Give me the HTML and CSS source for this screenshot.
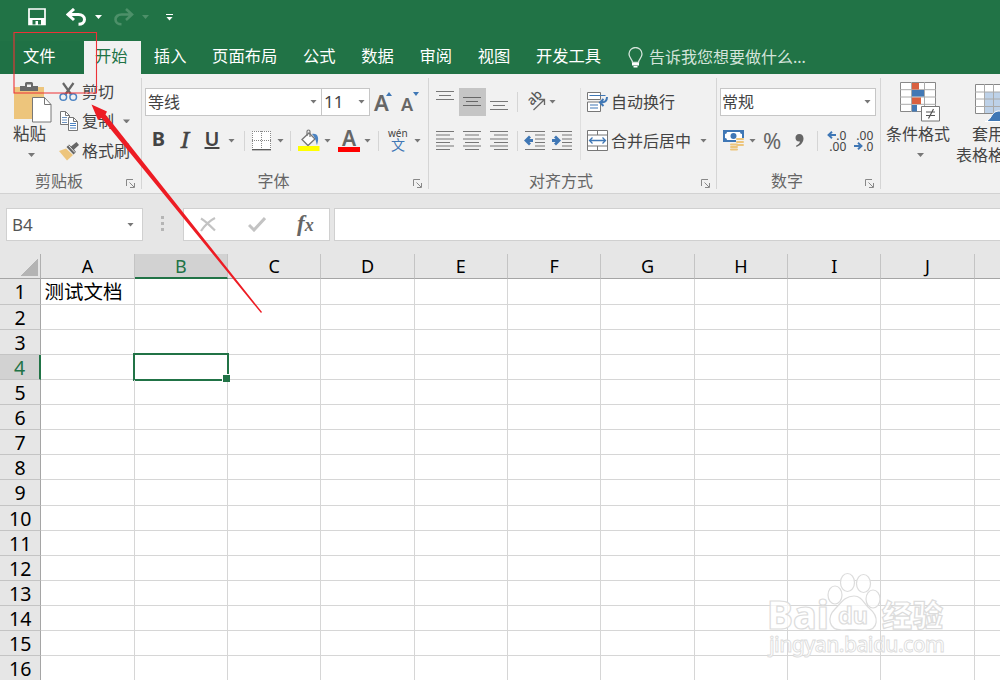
FILE: index.html
```
<!DOCTYPE html>
<html lang="zh-CN">
<head>
    <meta charset="utf-8">
    <title>Excel</title>
    <link rel="stylesheet" href="styles.css">
</head>
<body>
    <div class="title-bar">
        <svg class="qa-save" width="18" height="18" viewBox="0 0 18 18"><path d="M1 1h16v15.500H1z" fill="none" stroke="#fff" stroke-width="1.700"/><path d="M1 10h16v7H1z" fill="#fff"/><path d="M4.500 12H13v4.500H4.500z" fill="#217346"/><path d="M7.500 13h2.500v4H7.500z" fill="#fff"/></svg>
        <svg class="qa-undo" width="21" height="18" viewBox="0 0 21 18"><path d="M8 1L2 6.500l6 5.500M2.500 6.500h10c3.500 0 6 2 6 5s-2.500 4.800-6 4.800" fill="none" stroke="#fff" stroke-width="3"/></svg>
        <i class="caret white"></i>
        <svg class="qa-redo" width="21" height="18" viewBox="0 0 21 18"><path d="M13 1l6 5.500-6 5.500M18.500 6.500h-10c-3.500 0-6 2-6 5s2.500 4.800 6 4.800" fill="none" stroke="#4d9069" stroke-width="2.600"/></svg>
        <i class="caret dim"></i>
        <div class="qa-more"><i class="caret white"></i></div>
    </div>

    <div class="tabs">
        <div class="tab file">文件</div>
        <div class="tab active">开始</div>
        <div class="tab">插入</div>
        <div class="tab">页面布局</div>
        <div class="tab">公式</div>
        <div class="tab">数据</div>
        <div class="tab">审阅</div>
        <div class="tab">视图</div>
        <div class="tab">开发工具</div>
        <div class="tell-me">
            <svg width="15" height="21" viewBox="0 0 15 21"><path d="M4.500 15.500c0-3-3.500-4.500-3.500-8.500a6.300 6.300 0 0 1 13 0c0 4-3.500 5.500-3.500 8.500z" fill="none" stroke="#d3e3da" stroke-width="1.300"/><path d="M4 16h7v2.500H4zM5.500 19h4v1.500h-4z" fill="#fff"/></svg>
            <span>告诉我您想要做什么...</span>
        </div>
    </div>

    <div class="ribbon">
        <div class="group clipboard">
            <div class="group-body">
                <div class="paste">
                    <svg width="38" height="41" viewBox="0 0 38 41"><path d="M0 5h30v32H0z" fill="#edc57c"/><path d="M6 4h5V1.500Q11 0 12.500 0h5Q19 0 19 1.500V4h5v5H6z" fill="#6a6a6a"/><path d="M13 2.500h4V5h-4z" fill="#f1f1f1"/><path d="M18.500 15.500h12l6.500 7V40H18.500z" fill="#fff" stroke="#777"/><path d="M30.500 15.500v7H37" fill="none" stroke="#777"/></svg>
                    <span>粘贴</span>
                    <i class="caret"></i>
                </div>
                <div class="clip-list">
                    <div class="clip-item">
                        <svg width="20" height="20" viewBox="0 0 20 20"><path d="M4 1l8.500 12M14.500 1L6 13" stroke="#666" stroke-width="2.200" fill="none"/><circle cx="4.300" cy="15" r="3.300" fill="none" stroke="#4b83c3" stroke-width="1.500"/><circle cx="14.200" cy="15" r="3.300" fill="none" stroke="#4b83c3" stroke-width="1.500"/></svg>
                        <span>剪切</span>
                    </div>
                    <div class="clip-item">
                        <svg width="20" height="20" viewBox="0 0 20 20"><path d="M1.500.500h5l4 4v9h-9z" fill="#fff" stroke="#777"/><path d="M6.500.500v4h4" fill="none" stroke="#777"/><path d="M3 6.500h5M3 9h5M3 11.500h5" stroke="#6d93c0"/><path d="M9.500 6.500h5l4 4v9h-9z" fill="#fff" stroke="#777"/><path d="M14.500 6.500v4h4" fill="none" stroke="#777"/><path d="M11 12.500h6M11 14.500h6M11 17h6" stroke="#4b83c3"/></svg>
                        <span>复制</span>
                        <i class="caret"></i>
                    </div>
                    <div class="clip-item">
                        <svg width="20" height="20" viewBox="0 0 20 20"><path d="M0 10l7-2.500 7 6.500-6 5.500z" fill="#edc57c"/><path d="M7.500 6l7 7.500 2.500-2.500-2-2.500L20 4l-2.500-3-5.500 4.500-2-2z" fill="#666"/><path d="M9.500 4.500l6.500 7" stroke="#f1f1f1"/></svg>
                        <span>格式刷</span>
                    </div>
                </div>
            </div>
            <div class="group-name">剪贴板</div>
            <svg class="launcher" width="9" height="9" viewBox="0 0 9 9"><path d="M.500 7V.500H7M3.500 3.500L8 8M8.500 4v4.500H4" fill="none" stroke="#888"/></svg>
        </div>

        <div class="group font">
            <div class="row">
                <div class="box font-name"><span>等线</span><i class="caret"></i></div>
                <div class="box font-size"><span>11</span><i class="caret"></i></div>
                <div class="grow-font">A<i class="tri-up"></i></div>
                <div class="shrink-font">A<i class="tri-down"></i></div>
            </div>
            <div class="row second">
                <div class="letter bold">B</div>
                <div class="letter italic">I</div>
                <div class="letter underline"><u>U</u></div>
                <i class="caret"></i>
                <div class="sep"></div>
                <svg class="border-icon" width="19" height="20" viewBox="0 0 19 20"><path d="M0 0h19v19H0z" fill="#fff"/><path d="M.500 0v19M18.500 0v19M9.500 0v19M0 .500h19M0 9.500h19" stroke="#888" stroke-dasharray="1 1" fill="none"/><path d="M0 18.700h19" stroke="#555" stroke-width="1.300"/></svg>
                <i class="caret"></i>
                <div class="sep"></div>
                <svg class="fill-icon" width="22" height="23" viewBox="0 0 22 23"><path d="M4 10.500l7-6.500 6 6-7 6.500z" fill="#fff" stroke="#777" stroke-width="1.300"/><path d="M9 7V2.500Q9 1 10.500 1T12 2.500V8" fill="none" stroke="#777" stroke-width="1.200"/><path d="M14 5c6-1 7.500 4 5 11-1-2-.500-6-5-11z" fill="#4b83c3"/><path d="M0 17h21.500v5H0z" fill="#ffff00"/></svg>
                <i class="caret"></i>
                <div class="font-color">A</div>
                <i class="caret"></i>
                <div class="sep"></div>
                <div class="phonetic"><span>wén</span><b>文</b></div>
                <i class="caret"></i>
            </div>
            <div class="group-name">字体</div>
            <svg class="launcher" width="9" height="9" viewBox="0 0 9 9"><path d="M.500 7V.500H7M3.500 3.500L8 8M8.500 4v4.500H4" fill="none" stroke="#888"/></svg>
        </div>

        <div class="group align">
            <div class="align-left">
                <div class="row">
                    <svg class="al" width="27" height="27" viewBox="0 0 27 27"><path d="M4 3.500h18M7 7.500h12M4 11.500h18" stroke="#777" stroke-width="1.200"/></svg>
                    <svg class="al on" width="27" height="28" viewBox="0 0 27 28"><path d="M4 9.500h18M7 13.500h12M4 17.500h18" stroke="#666" stroke-width="1.200"/></svg>
                    <svg class="al" width="27" height="27" viewBox="0 0 27 27"><path d="M4 13.500h18M7 17.500h12M4 21.500h18" stroke="#777" stroke-width="1.200"/></svg>
                    <div class="sep"></div>
                    <svg class="orient" width="19" height="20" viewBox="0 0 19 20"><text class="ab" x="0" y="0" transform="translate(5 14) rotate(-45)">ab</text><path d="M6.500 18L17 8M12 7.500h5.500V13" fill="none" stroke="#666" stroke-width="1.300"/></svg>
                    <i class="caret"></i>
                </div>
                <div class="row second">
                    <svg class="al" width="27" height="27" viewBox="0 0 27 27"><path d="M4 4.500h18M4 8h14M4 12h18M4 15.500h14M4 19h18M4 22.500h14" stroke="#777" stroke-width="1.200"/></svg>
                    <svg class="al" width="27" height="27" viewBox="0 0 27 27"><path d="M4 4.500h18M6 8h14M4 12h18M6 15.500h14M4 19h18M6 22.500h14" stroke="#777" stroke-width="1.200"/></svg>
                    <svg class="al" width="27" height="27" viewBox="0 0 27 27"><path d="M4 4.500h18M8 8h14M4 12h18M8 15.500h14M4 19h18M8 22.500h14" stroke="#777" stroke-width="1.200"/></svg>
                    <div class="sep"></div>
                    <svg class="indent" width="27" height="27" viewBox="0 0 27 27"><path d="M4 4.500h20M14 8h10M14 12h10M14 15.500h10M14 19h10M4 22.500h20" stroke="#777" stroke-width="1.200"/><path d="M12 13.500H5M9 9.500l-4 4 4 4" fill="none" stroke="#3f77b5" stroke-width="2.800"/></svg>
                    <svg class="indent" width="27" height="27" viewBox="0 0 27 27"><path d="M4 4.500h20M14 8h10M14 12h10M14 15.500h10M14 19h10M4 22.500h20" stroke="#777" stroke-width="1.200"/><path d="M4 13.500h7M7 9.500l4 4-4 4" fill="none" stroke="#3f77b5" stroke-width="2.800"/></svg>
                </div>
            </div>
            <div class="align-right">
                <div class="row">
                    <svg width="21" height="20" viewBox="0 0 21 20"><path d="M.500.500h13v7H.500zM.500 10h13v9.500H.500z" fill="#fff" stroke="#777"/><path d="M2.500 3.500h16M3 13h8M3 16h8" stroke="#3f77b5" stroke-width="1.200"/><path d="M20 5c0 4-2 5.500-6 5.500M16.500 7l-3.500 3.500 3.500 3.500" fill="none" stroke="#3f77b5" stroke-width="2"/></svg>
                    <span>自动换行</span>
                </div>
                <div class="row second">
                    <svg width="21" height="21" viewBox="0 0 21 21"><path d="M.500.500h20v20H.500zM.500 5h20M.500 16h20M10.500 0v5M10.500 16v5" fill="#fff" stroke="#777"/><path d="M2.500 10.500h16M5.500 7.500l-3 3 3 3M15.500 7.500l3 3-3 3" fill="none" stroke="#3f77b5" stroke-width="1.300"/></svg>
                    <span>合并后居中</span>
                    <i class="caret"></i>
                </div>
            </div>
            <div class="group-name">对齐方式</div>
            <svg class="launcher" width="9" height="9" viewBox="0 0 9 9"><path d="M.500 7V.500H7M3.500 3.500L8 8M8.500 4v4.500H4" fill="none" stroke="#888"/></svg>
        </div>

        <div class="group number">
            <div class="row">
                <div class="box number-format"><span>常规</span><i class="caret"></i></div>
            </div>
            <div class="row second">
                <svg class="money" width="22" height="21" viewBox="0 0 22 21"><path d="M0 0h21v12H0z" fill="#3f77b5"/><path d="M4 2h13q0 2 2 2v4q-2 0-2 2H4q0-2-2-2V4q2 0 2-2z" fill="#fff"/><circle cx="10.500" cy="6" r="3" fill="#3f77b5"/><path d="M13 8h8v10h-8zM7 13h8v8H7z" fill="#f1f1f1"/><path d="M14 9h6M14 12h6M14 15h6M8 14.500h6M8 17h6M8 19.500h6" stroke="#edc57c" stroke-width="2" stroke-linecap="round"/></svg>
                <i class="caret"></i>
                <div class="percent">%</div>
                <svg class="comma" width="9" height="13" viewBox="0 0 9 13"><path d="M4.200 0C7 0 8.500 2 8.500 4.500c0 4-3 7-7 8.500l-.500-1.300C3.500 10.500 5 9 5 7.500 2 8 .500 6 .500 4A4 4 0 0 1 4.200 0z" fill="#666"/></svg>
                <div class="sep"></div>
                <div class="decimal"><span><svg width="9" height="8" viewBox="0 0 9 8"><path d="M9 4H2M5 .700L1.500 4 5 7.300" fill="none" stroke="#3f77b5" stroke-width="1.900"/></svg>.0</span><span>.00</span></div>
                <div class="decimal"><span>.00</span><span><svg width="9" height="8" viewBox="0 0 9 8"><path d="M0 4h7M4 .700L7.500 4 4 7.300" fill="none" stroke="#3f77b5" stroke-width="1.900"/></svg>.0</span></div>
            </div>
            <div class="group-name">数字</div>
            <svg class="launcher" width="9" height="9" viewBox="0 0 9 9"><path d="M.500 7V.500H7M3.500 3.500L8 8M8.500 4v4.500H4" fill="none" stroke="#888"/></svg>
        </div>

        <div class="group styles">
            <div class="big-button">
                <svg width="40" height="40" viewBox="0 0 40 40"><path d="M.500.500h35v29H.500z" fill="#fff" stroke="#888"/><path d="M11.500 0v30M24.500 0v30M0 7.700h36M0 15h36M0 22.300h36" stroke="#aaa"/><path d="M12 1h7v6.500h-7zM12 15.500h9V22h-9z" fill="#d9603f"/><path d="M12 8h12v6.500H12zM12 23h5v6.500h-5z" fill="#4378b4"/><path d="M21.500 24.500h18v14.500h-18z" fill="#fff" stroke="#777"/><path d="M26 30h9M26 33.500h9M33.500 27l-5 9.500" stroke="#555" stroke-width="1.200"/></svg>
                <span>条件格式</span>
                <i class="caret"></i>
            </div>
            <div class="big-button">
                <svg width="40" height="40" viewBox="0 0 40 40"><path d="M.500 2.500h38v29H.500z" fill="#fff" stroke="#888"/><path d="M10 10h29v21H10z" fill="#bdd1e8"/><path d="M9.500 2v29M18.500 2v29M28 2v29M0 10h38M0 17h38M0 24.500h38" stroke="#aaa"/><path d="M10 39.500c6-1 6-8 11-10 6-2 9 2 9 10z" fill="#3f77b5" stroke="#fff"/></svg>
                <span>套用<br>表格格式</span>
            </div>
        </div>
    </div>

    <div class="formula-bar">
        <div class="name-box"><span>B4</span><i class="caret"></i></div>
        <div class="dots"><i></i><i></i><i></i></div>
        <div class="fx-box">
            <svg width="16" height="15" viewBox="0 0 16 15"><path d="M1 1.500c5 3 9 7 14 12M15 1C9 4 5 8 1 14" fill="none" stroke="#c3c3c3" stroke-width="2.200"/></svg>
            <svg width="18" height="15" viewBox="0 0 18 15"><path d="M1 8l5 5L17 1" fill="none" stroke="#c3c3c3" stroke-width="3"/></svg>
            <div class="fx"><span>f</span>x</div>
        </div>
        <div class="formula-input"></div>
    </div>

    <div class="sheet" id="sheet"></div>

    <svg class="watermark" width="190" height="95" viewBox="0 0 190 95">
        <g class="wm">
            <text class="wm-bai" x="4" y="64" textLength="62" lengthAdjust="spacingAndGlyphs">Bai</text>
            <ellipse cx="72" cy="30" rx="7" ry="9"/>
            <ellipse cx="84.500" cy="17.500" rx="7" ry="9"/>
            <ellipse cx="100.500" cy="18.500" rx="7" ry="9"/>
            <ellipse cx="110" cy="34" rx="7" ry="9"/>
            <path d="M91 31c8 0 10 8 15 12 11 9 9 22-3 22-8 0-16-1-24 0-14 0-15-13-7-21 6-6 10-13 19-13z"/>
            <text class="wm-du" x="75" y="59" textLength="30" lengthAdjust="spacingAndGlyphs">du</text>
            <text class="wm-cn" x="119" y="61" textLength="61">经验</text>
            <text class="wm-url" x="6" y="87" textLength="176">jingyan.baidu.com</text>
        </g>
    </svg>

    <svg class="marks" width="1000" height="680" viewBox="0 0 1000 680">
        <path d="M14 32.500h82.500V93H14z" fill="none" stroke="#ed3237" stroke-width="1.100"/>
        <path d="M91.500 104.500L107 111.500l-1.500 3L262 312l-1 1L101.500 118 98 120z" fill="#ed1c24"/>
    </svg>

    <script>
        // Build the worksheet grid
        const sheet = document.getElementById('sheet');
        const columns = ['A', 'B', 'C', 'D', 'E', 'F', 'G', 'H', 'I', 'J', ''];
        const values = { A1: '测试文档' };

        function addCell(text, className) {
            const cell = document.createElement('div');
            cell.className = className;
            cell.textContent = text;
            sheet.appendChild(cell);
            return cell;
        }

        addCell('', 'corner');
        columns.forEach(c => addCell(c, c === 'B' ? 'col-head current' : 'col-head'));

        for (let r = 1; r <= 16; r++) {
            addCell(r, r === 4 ? 'row-head current' : 'row-head');
            columns.forEach(c => {
                const cell = addCell(values[c + r] || '', 'cell');
                if (c === 'B' && r === 4) {
                    cell.classList.add('selected');
                }
            });
        }
    </script>
</body>
</html>
```
FILE: styles.css
```
* {
    box-sizing: border-box;
}
body {
    margin: 0;
    width: 1000px;
    height: 680px;
    overflow: hidden;
    position: relative;
    background-color: #fff;
    color: #444;
    font-family: "Noto Sans", "Noto Sans CJK SC", sans-serif;
    font-size: 16px;
    line-height: 20px;
}
svg {
    display: block;
    flex: none;
}
.caret {
    display: block;
    flex: none;
    width: 7px;
    height: 4px;
    background-color: #777;
    clip-path: polygon(0 0, 100% 0, 50% 100%);
}
.caret.white {
    background-color: #fff;
}
.caret.dim {
    background-color: #4d9069;
}
.title-bar {
    display: flex;
    align-items: center;
    height: 41px;
    padding: 0 0 7px 28px;
    background-color: #217346;
}
.qa-undo {
    margin: 0 8px 0 20px;
}
.qa-redo {
    margin: 0 8px 0 11px;
}
.qa-more {
    margin-left: 17px;
    padding-top: 2px;
    border-top: 1px solid #fff;
}
.tabs {
    display: flex;
    height: 33px;
    background-color: #217346;
    color: #fff;
    font-size: 16.3px;
    line-height: 31px;
    white-space: nowrap;
}
.tab {
    padding: 0 12.850px;
}
.tab.file {
    width: 84px;
    padding: 0 0 0 23px;
    background-color: #1f7145;
}
.tab.active {
    width: 57px;
    padding: 0 0 0 11px;
    background-color: #f1f1f1;
    color: #217346;
}
.tell-me {
    display: flex;
    align-items: center;
    gap: 6px;
    margin-left: 14px;
    font-size: 16px;
    color: #d3e3da;
}
.ribbon {
    display: flex;
    height: 120px;
    background-color: #f1f1f1;
    border-bottom: 1px solid #d2d2d2;
    overflow: hidden;
    white-space: nowrap;
}
.group {
    position: relative;
    flex: none;
    padding-top: 14px;
}
.group::after {
    content: "";
    position: absolute;
    right: 0;
    top: 4px;
    width: 1px;
    height: 111px;
    background-color: #d5d5d5;
}
.group-name {
    position: absolute;
    left: 0;
    right: 24px;
    top: 97px;
    text-align: center;
    color: #666;
}
.launcher {
    position: absolute;
    right: 7px;
    top: 105px;
}
.row {
    display: flex;
    align-items: center;
    height: 27px;
}
.row.second {
    margin-top: 12px;
}
.sep {
    flex: none;
    width: 1px;
    height: 20px;
    background-color: #d5d5d5;
}
.clipboard {
    width: 142px;
    padding-top: 0;
}
.group-body {
    display: flex;
}
.paste {
    width: 59px;
    padding: 8px 0 0 14px;
    color: #444;
}
.paste span {
    display: block;
    margin: 1px 0 9px -1px;
    font-size: 16.500px;
}
.paste .caret {
    margin-left: 14px;
}
.clip-list {
    padding-top: 3px;
}
.clip-item {
    display: flex;
    align-items: center;
    height: 29.600px;
}
.clip-item span {
    margin-left: 3px;
}
.clip-item .caret {
    margin-left: 9px;
}
.font {
    width: 287px;
    padding-left: 3px;
}
.box {
    display: flex;
    align-items: center;
    justify-content: space-between;
    height: 28px;
    padding: 0 4px 0 2px;
    border: 1px solid #c6c6c6;
    background-color: #fff;
}
.font-name {
    width: 177px;
}
.font-size {
    width: 49px;
    margin-left: -1px;
}
.font-size span {
    font-size: 17px;
}
.grow-font,
.shrink-font {
    position: relative;
    margin-left: 4px;
    width: 20px;
    padding-top: 1px;
    font-size: 22px;
    font-weight: 600;
    color: #666;
}
.shrink-font {
    margin-left: 7px;
    padding-top: 5px;
    font-size: 18px;
}
.tri-up,
.tri-down {
    position: absolute;
    left: 12px;
    top: 1px;
    width: 6px;
    height: 4px;
    background-color: #3f77b5;
    clip-path: polygon(0 100%, 50% 0, 100% 100%);
}
.tri-down {
    top: 3px;
    clip-path: polygon(0 0, 100% 0, 50% 100%);
}
.letter {
    width: 27px;
    margin-top: -3px;
    text-align: center;
    font-size: 20px;
    font-weight: 700;
}
.letter.italic {
    width: 26px;
    font-family: "Noto Serif", "Liberation Serif", serif;
    font-style: italic;
    font-weight: 400;
    font-size: 22px;
    -webkit-text-stroke: 0.6px #444;
}
.letter.underline {
    width: 28px;
    font-weight: 600;
}
.letter + .caret {
    margin: 0 9px 0 2px;
}
.border-icon {
    margin: 0 6px 0 7px;
}
.border-icon + .caret {
    margin-right: 6px;
}
.fill-icon {
    margin: 0 4px 0 7px;
}
.font-color {
    width: 22px;
    height: 23px;
    margin: 0 4px 0 7px;
    border-bottom: 5px solid #f00;
    text-align: center;
    font-size: 21px;
    line-height: 18px;
    font-weight: 600;
    color: #666;
}
.font-color + .caret {
    margin-right: 7px;
}
.phonetic {
    width: 20px;
    margin: 0 6px 0 9px;
    font-size: 10px;
    line-height: 8px;
}
.phonetic span {
    display: block;
}
.phonetic b {
    display: block;
    margin-left: 3px;
    font-size: 14px;
    line-height: 16px;
    font-weight: 400;
    color: #3f77b5;
}
.align {
    display: flex;
    width: 288px;
    padding-left: 3px;
}
.align-left {
    width: 149px;
    height: 72px;
    border-right: 1px solid #dedede;
}
.al.on {
    background-color: #c5c5c5;
}
.al + .sep {
    margin-left: 4px;
}
.orient {
    margin: 0 3px 0 9px;
    overflow: visible;
}
.ab {
    font-size: 13px;
    font-weight: 500;
    fill: #555;
}
.indent {
    margin-left: 3px;
}
.indent + .indent {
    margin-left: 0;
}
.align-right {
    padding-left: 6px;
}
.align-right span {
    margin: 1px 9px 0 3px;
}
.number {
    width: 164px;
    padding-left: 3px;
}
.number-format {
    width: 156px;
}
.number-format span {
    margin-left: -1px;
}
.money {
    margin: 0 4px 0 3px;
}
.percent {
    margin-left: 7px;
    margin-top: -2px;
    font-size: 22px;
    color: #666;
}
.comma {
    margin-left: 14px;
}
.comma + .sep {
    margin: 0 6px 0 13px;
}
.decimal {
    width: 22px;
    margin-right: 5px;
    font-size: 12px;
    line-height: 11px;
    text-align: right;
}
.decimal span {
    display: flex;
    align-items: center;
    justify-content: flex-end;
}
.styles {
    display: flex;
    width: 200px;
    padding: 8px 0 0 3px;
}
.styles::after {
    display: none;
}
.big-button {
    display: flex;
    flex-direction: column;
    align-items: center;
    width: 68px;
    text-align: center;
}
.big-button svg {
    margin-left: 4px;
}
.big-button .caret {
    margin-left: 5px;
}
.big-button + .big-button {
    margin-left: 2px;
}
.big-button span {
    margin: 2px 0 9px;
}
.big-button + .big-button svg {
    margin-left: 14px;
}
.big-button + .big-button span {
    line-height: 21px;
}
.formula-bar {
    display: flex;
    height: 60px;
    padding: 14px 0 0 6px;
    background-color: #e6e6e6;
}
.name-box {
    display: flex;
    align-items: center;
    justify-content: space-between;
    width: 137px;
    height: 33px;
    padding: 0 8px 0 5px;
    border: 1px solid #d0d0d0;
    background-color: #fff;
    color: #555;
    font-size: 17px;
}
.dots {
    display: flex;
    flex-direction: column;
    justify-content: center;
    gap: 3px;
    width: 40px;
    height: 31px;
    padding-right: 2px;
    align-items: center;
}
.dots i {
    width: 3px;
    height: 3px;
    background-color: #b5b5b5;
}
.fx-box {
    display: flex;
    align-items: center;
    width: 147px;
    height: 33px;
    padding-left: 16px;
    border: 1px solid #d0d0d0;
    background-color: #fff;
}
.fx-box svg + svg {
    margin-left: 32px;
}
.fx {
    margin-left: 31px;
    font-family: "Liberation Serif", serif;
    font-size: 18px;
    font-style: italic;
    font-weight: 700;
    color: #666;
}
.fx span {
    font-size: 23px;
}
.formula-input {
    flex: 1;
    height: 33px;
    margin-left: 4px;
    border: 1px solid #d0d0d0;
    border-right: none;
    background-color: #fff;
}
.sheet {
    display: grid;
    grid-template-columns: 41.400px repeat(11, 93.330px);
    grid-template-rows: 25.400px repeat(16, 25.130px);
    color: #000;
    font-size: 19.500px;
    line-height: 26px;
}
.corner {
    border-right: 1px solid #b0b0b0;
    border-bottom: 1px solid #a5a5a5;
    background: linear-gradient(135deg, transparent 50%, #b4b4b4 50%) 20px 4px / 18px 18px no-repeat, #e6e6e6;
}
.col-head {
    border-right: 1px solid #c4c4c4;
    border-bottom: 1px solid #a5a5a5;
    background-color: #e6e6e6;
    text-align: center;
    font-size: 18px;
    line-height: 25px;
}
.col-head.current {
    border-bottom: 2px solid #217346;
    background-color: #d2d2d2;
    color: #217346;
}
.row-head {
    border-right: 1px solid #a5a5a5;
    border-bottom: 1px solid #c4c4c4;
    background-color: #e6e6e6;
    text-align: center;
}
.row-head.current {
    border-right: 2px solid #217346;
    background-color: #d2d2d2;
    color: #217346;
}
.cell {
    position: relative;
    padding-left: 3px;
    border-right: 1px solid #d6d6d6;
    border-bottom: 1px solid #d6d6d6;
    white-space: nowrap;
}
.selected::before {
    content: "";
    position: absolute;
    left: -2px;
    top: -2px;
    right: -2px;
    bottom: -2px;
    border: 2px solid #217346;
}
.selected::after {
    content: "";
    position: absolute;
    z-index: 1;
    right: -3px;
    bottom: -3px;
    width: 7px;
    height: 7px;
    background-color: #217346;
    border: 1px solid #fff;
    border-right: none;
    border-bottom: none;
}
.watermark {
    position: absolute;
    left: 763px;
    top: 565px;
}
.wm {
    fill: rgba(255, 255, 255, 0.75);
    stroke: #dcdcdc;
    stroke-width: 1.200px;
    font-family: "Noto Sans", "Noto Sans CJK SC", sans-serif;
}
.wm-bai {
    font-size: 40px;
    font-weight: 800;
}
.wm-du {
    font-size: 23px;
    font-weight: 700;
}
.wm-cn {
    font-size: 30px;
    font-weight: 900;
}
.wm-url {
    font-size: 21px;
    font-weight: 500;
    stroke-width: 0.900px;
}
.marks {
    position: absolute;
    left: 0;
    top: 0;
}
```
